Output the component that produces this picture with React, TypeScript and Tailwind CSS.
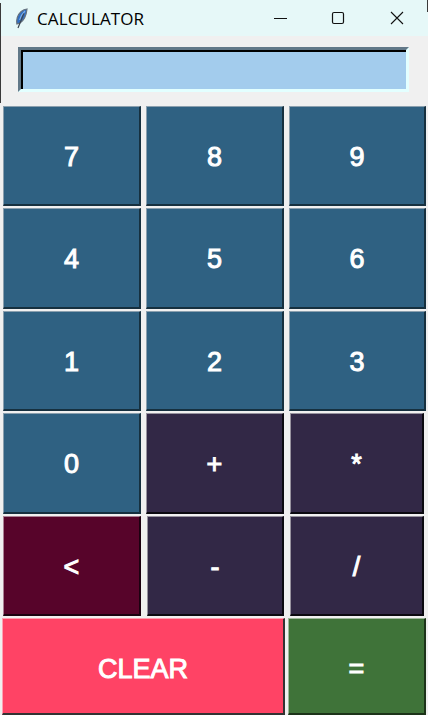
import React from "react";

function Btn({ label, className }: { label: string; className: string }) {
  return (
    <div
      className={
        "flex items-center justify-center border-t border-l border-r-2 border-b-2 text-[27px] font-normal text-white [-webkit-text-stroke:1px_white] font-['Liberation_Sans',Arial,sans-serif] " +
        className
      }
    >
      {label}
    </div>
  );
}

const blue = "pt-[3px] bg-[#2f6182] border-t-[#8a9fae] border-l-[#8a9fae] border-r-[#16303f] border-b-[#16303f]";
const navy = "pt-[3px] bg-[#322846] border-t-[#98939f] border-l-[#98939f] border-r-[#0b0910] border-b-[#0b0910]";
const wine = "pt-[3px] bg-[#57042a] border-t-[#ab8194] border-l-[#ab8194] border-r-[#1c0110] border-b-[#1c0110]";
const red = "pt-[7px] bg-[#ff4365] border-t-[#ffa1b2] border-l-[#ffa1b2] border-r-[#333333] border-b-[#333333]";
const green = "pt-[7px] bg-[#3f7339] border-t-[#9fb99c] border-l-[#9fb99c] border-r-[#1c3319] border-b-[#1c3319]";

export default function App() {
  return (
    <div className="relative flex h-[715px] w-[428px] flex-col overflow-hidden bg-[#f0f0f0] font-['Liberation_Sans',Arial,sans-serif]">
      <div className="absolute left-0 top-[3px] h-[100px] w-px bg-[#3a3a3a]" />
      <div className="absolute right-0 top-0 h-[12px] w-px bg-[#3a3a3a]" />
      <div className="flex h-[36px] shrink-0 items-center bg-[#e6f8f8] pl-[15px] font-['Open_Sans',sans-serif] text-black">
        <svg width="13" height="21" viewBox="0 0 13 21" className="mr-[9px] shrink-0">
          <path d="M12 1 C8 1.2 3.8 4.5 2.3 9.5 C1.6 12 1.5 14 1.9 16 L5 15 C9 12.5 11.4 7 12 1 Z" fill="#2f6fc4" stroke="#66727e" strokeWidth="1.2" />
          <path d="M10 3 C7 6 5.2 9 4.6 12" stroke="#7fb2ea" strokeWidth="1.2" fill="none" />
          <path d="M8.8 5.5 L3 20" stroke="#3b4652" strokeWidth="1.2" fill="none" />
        </svg>
        <span className="text-[17px] leading-none tracking-[0.1px]">CALCULATOR</span>
        <div className="ml-auto flex items-center">
          <svg width="14" height="14" viewBox="0 0 14 14" className="mr-[44px] mt-[-1px]">
            <path d="M1 7.5 H14" stroke="#111" strokeWidth="1" />
          </svg>
          <svg width="14" height="14" viewBox="0 0 14 14" className="mr-[45px] mt-[-1px]">
            <rect x="1.5" y="1.5" width="11" height="11" rx="1.5" fill="none" stroke="#111" strokeWidth="1.2" />
          </svg>
          <svg width="14" height="14" viewBox="0 0 14 14" className="mr-[24px] mt-[-1px]">
            <path d="M1 1 L13 13 M13 1 L1 13" stroke="#111" strokeWidth="1.1" />
          </svg>
        </div>
      </div>

      <div className="ml-[18px] mt-[11px] h-[45px] w-[391px] shrink-0 border-[3px] border-t-[#627888] border-l-[#627888] border-r-[#e3ffff] border-b-[#e3ffff]">
        <div className="h-full w-full border-t-[2px] border-l-[2px] border-t-black border-l-black bg-[#a3cced]" />
      </div>

      <div className="mt-[14px] flex h-[100px] shrink-0 gap-[5px] pl-[3px]">
        <Btn label="7" className={"w-[138px] " + blue} />
        <Btn label="8" className={"w-[138px] " + blue} />
        <Btn label="9" className={"w-[137px] " + blue} />
      </div>
      <div className="mt-[2px] flex h-[101px] shrink-0 gap-[5px] pl-[3px]">
        <Btn label="4" className={"w-[138px] " + blue} />
        <Btn label="5" className={"w-[138px] " + blue} />
        <Btn label="6" className={"w-[137px] " + blue} />
      </div>
      <div className="mt-[2px] flex h-[100px] shrink-0 gap-[5px] pl-[3px]">
        <Btn label="1" className={"w-[138px] " + blue} />
        <Btn label="2" className={"w-[138px] " + blue} />
        <Btn label="3" className={"w-[137px] " + blue} />
      </div>
      <div className="mt-[2px] flex h-[101px] shrink-0 pl-[3px]">
        <Btn label="0" className={"w-[138px] " + blue} />
        <Btn label="+" className={"ml-[5px] w-[138px] " + navy} />
        <Btn label="*" className={"ml-[6px] w-[134px] " + navy} />
      </div>
      <div className="mt-[2px] flex h-[100px] shrink-0 pl-[3px]">
        <Btn label="<" className={"w-[138px] " + wine} />
        <Btn label="-" className={"ml-[6px] w-[137px] " + navy} />
        <Btn label="/" className={"ml-[6px] w-[134px] " + navy} />
      </div>
      <div className="mt-[2px] flex h-[97px] shrink-0 gap-[3px] pl-[2px]">
        <Btn label="CLEAR" className={"w-[283px] " + red} />
        <Btn label="=" className={"w-[138px] " + green} />
      </div>
    </div>
  );
}
